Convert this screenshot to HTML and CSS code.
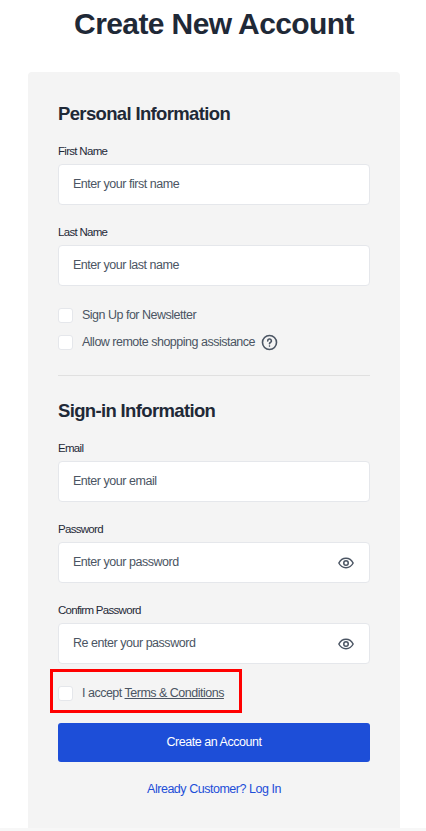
FILE: index.html
```html
<!DOCTYPE html>
<html lang="en">
<head>
<meta charset="utf-8">
<title>Create New Account</title>
<link rel="stylesheet" href="styles.css">
</head>
<body>
<main class="page">
  <h1 class="title">Create New Account</h1>
  <form class="card">
    <h2 class="section-title">Personal Information</h2>
    <div class="field">
      <label class="label">First Name</label>
      <div class="input"><span class="placeholder">Enter your first name</span></div>
    </div>
    <div class="field">
      <label class="label">Last Name</label>
      <div class="input"><span class="placeholder">Enter your last name</span></div>
    </div>
    <div class="checks">
      <div class="check"><span class="box"></span><span class="check-text">Sign Up for Newsletter</span></div>
      <div class="check"><span class="box"></span><span class="check-text">Allow remote shopping assistance</span>
        <svg class="help" viewBox="0 0 16 16" fill="none" stroke="#4b5563" stroke-width="1.5"><circle cx="8" cy="8" r="6.600"/><path d="M6.300 6.500a1.750 1.750 0 1 1 2.600 1.500c-.6.350-.9.600-.9 1.100" stroke-linecap="round"/><circle cx="8" cy="11.300" r=".5" fill="#4b5563" stroke-width=".6"/></svg>
      </div>
    </div>
    <hr class="divider">
    <h2 class="section-title">Sign-in Information</h2>
    <div class="field">
      <label class="label">Email</label>
      <div class="input"><span class="placeholder">Enter your email</span></div>
    </div>
    <div class="field">
      <label class="label">Password</label>
      <div class="input"><span class="placeholder">Enter your password</span>
        <svg class="eye" viewBox="0 0 24 24" fill="none" stroke="#4b5563" stroke-width="2"><path d="M2.500 12C4.600 7.800 8 5.700 12 5.700s7.400 2.100 9.500 6.300c-2.100 4.200-5.500 6.300-9.500 6.300S4.600 16.200 2.500 12z"/><circle cx="12" cy="12" r="3"/></svg>
      </div>
    </div>
    <div class="field">
      <label class="label">Confirm Password</label>
      <div class="input"><span class="placeholder">Re enter your password</span>
        <svg class="eye" viewBox="0 0 24 24" fill="none" stroke="#4b5563" stroke-width="2"><path d="M2.500 12C4.600 7.800 8 5.700 12 5.700s7.400 2.100 9.500 6.300c-2.100 4.200-5.500 6.300-9.500 6.300S4.600 16.200 2.500 12z"/><circle cx="12" cy="12" r="3"/></svg>
      </div>
    </div>
    <div class="terms">
      <span class="highlight"></span>
      <span class="box"></span><span class="check-text">I accept <a class="terms-link" href="#">Terms &amp; Conditions</a></span>
    </div>
    <button class="submit" type="button">Create an Account</button>
    <a class="login" href="#">Already Customer? Log In</a>
  </form>
</main>
<div class="band"></div>
</body>
</html>
```
FILE: styles.css
```css
* { box-sizing: border-box; }
html, body { margin: 0; height: 831px; overflow: hidden; background: #fff; }
body { font-family: "Liberation Sans", Arial, sans-serif; color: #1f2937; }
.page { display: flex; flex-direction: column; align-items: center; height: 828px; padding-left: 2px; }
.title { margin: 6px 0 0; height: 66px; font-size: 30px; line-height: 36px; font-weight: 700; letter-spacing: -0.6px; color: #1f2937; }
.card { width: 372px; flex: 1; background: #f4f4f4; border-radius: 4px 4px 0 0; padding: 30px 30px 0; display: flex; flex-direction: column; }
.section-title { margin: 0; font-size: 18.500px; line-height: 24px; font-weight: 700; letter-spacing: -0.65px; color: #1f2937; }
.field { margin-top: 19px; }
.section-title + .field { margin-top: 17px; }
.label { display: block; font-size: 11.500px; line-height: 16px; letter-spacing: -0.7px; color: #1f2937; margin-bottom: 5px; }
.input { height: 41px; background: #fff; border: 1px solid #e5e7eb; border-radius: 4px; padding: 0 14px; display: flex; align-items: center; justify-content: space-between; }
.placeholder { font-size: 12.500px; letter-spacing: -0.47px; line-height: 16px; margin-top: -1px; color: #4b5563; }
.eye { width: 18px; height: 18px; }
.checks { margin-top: 21px; display: flex; flex-direction: column; gap: 11px; }
.check { display: flex; align-items: center; height: 16px; }
.box { width: 15px; height: 15px; background: #fff; border: 1px solid #e5e7eb; border-radius: 3px; margin-right: 9px; flex: none; }
.check-text { font-size: 12.500px; letter-spacing: -0.5px; color: #4b5563; white-space: nowrap; }
.help { width: 17px; height: 17px; margin-left: 6px; }
.divider { width: 100%; height: 1px; border: 0; background: #e0e0e0; margin: 25px 0 23px; }
.terms { position: relative; display: flex; align-items: center; height: 16px; margin-top: 21px; }
.highlight { position: absolute; left: -8px; top: -16px; width: 192px; height: 44px; border: 3px solid #ff0000; }
.terms-link { color: #4b5563; text-decoration: underline; }
.submit { margin-top: 22px; height: 39px; width: 100%; border: 0; border-radius: 3px; padding-bottom: 2px; background: #1d4ed8; color: #fff; font: 12.500px "Liberation Sans", Arial, sans-serif; letter-spacing: -0.47px; }
.login { margin-top: 19px; text-align: center; font-size: 12.500px; line-height: 16px; letter-spacing: -0.47px; color: #1d4ed8; text-decoration: none; }
.band { height: 3px; background: #f7f7f7; }
```
